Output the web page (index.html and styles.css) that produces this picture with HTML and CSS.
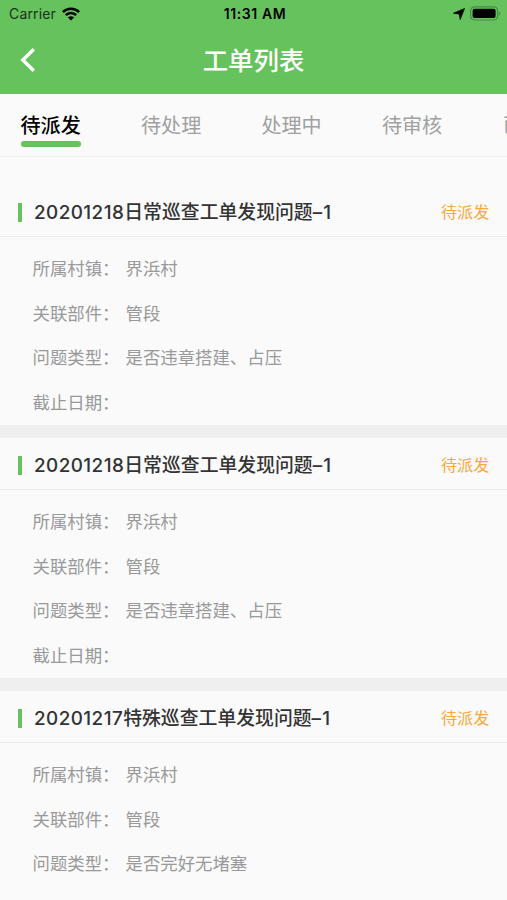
FILE: index.html
```
<!DOCTYPE html>
<html lang="zh-CN">
<head>
  <meta charset="UTF-8">
  <title>工单列表</title>
  <meta name="viewport" content="width=device-width, initial-scale=1.0">
  <link rel="stylesheet" href="styles.css">
</head>
<body>
  <header>
    <div class="status-bar">
      <div class="carrier">
        <span>Carrier</span>
        <svg class="wifi" viewBox="0 0 18 14" width="18" height="14">
          <g fill="none" stroke="#000" stroke-width="2.5">
            <path d="M0.9 5.1a11.5 11.5 0 0 1 16.2 0"/>
            <path d="M3.8 8.2a7.3 7.3 0 0 1 10.4 0"/>
          </g>
          <path d="M9 13.6l-3.1-3.1a4.4 4.4 0 0 1 6.2 0z"/>
        </svg>
      </div>
      <div class="time">11:31 AM</div>
      <div class="battery-box">
        <svg viewBox="0 0 12 12" width="12" height="12">
          <path d="M11.6 0.4L7.2 11.6L6.2 6L0.4 5.2z" stroke="#000" stroke-width="0.7" stroke-linejoin="round"/>
        </svg>
        <svg viewBox="0 0 31 15" width="31" height="15">
          <rect x="0.6" y="0.8" width="27" height="13.2" rx="4" fill="none" stroke="#439042" stroke-width="1.2"/>
          <rect x="2.6" y="2.8" width="23" height="9.2" rx="2"/>
          <path d="M28.8 5.2q3 2.2 0 4.4z" fill="#439042"/>
        </svg>
      </div>
    </div>
    <div class="nav">
      <a class="back" href="#">
        <svg viewBox="0 0 16 26" width="16" height="26">
          <path d="M13.8 2.2L2.8 13l11 10.8" fill="none" stroke="#fff" stroke-width="3.4"/>
        </svg>
      </a>
      <h1>工单列表</h1>
    </div>
  </header>

  <nav class="tabs">
    <a class="tab active">待派发</a>
    <a class="tab">待处理</a>
    <a class="tab">处理中</a>
    <a class="tab">待审核</a>
    <a class="tab">已完成</a>
  </nav>

  <main class="list">
    <section class="card">
      <div class="card-head">
        <h2><span class="num">20201218</span>日常巡查工单发现问题<span class="num">–1</span></h2>
        <span class="state">待派发</span>
      </div>
      <ul class="info">
        <li><span class="label">所属村镇：</span>界浜村</li>
        <li><span class="label">关联部件：</span>管段</li>
        <li><span class="label">问题类型：</span>是否违章搭建、占压</li>
        <li><span class="label">截止日期：</span></li>
      </ul>
    </section>

    <section class="card">
      <div class="card-head">
        <h2><span class="num">20201218</span>日常巡查工单发现问题<span class="num">–1</span></h2>
        <span class="state">待派发</span>
      </div>
      <ul class="info">
        <li><span class="label">所属村镇：</span>界浜村</li>
        <li><span class="label">关联部件：</span>管段</li>
        <li><span class="label">问题类型：</span>是否违章搭建、占压</li>
        <li><span class="label">截止日期：</span></li>
      </ul>
    </section>

    <section class="card">
      <div class="card-head">
        <h2><span class="num">20201217</span>特殊巡查工单发现问题<span class="num">–1</span></h2>
        <span class="state">待派发</span>
      </div>
      <ul class="info">
        <li><span class="label">所属村镇：</span>界浜村</li>
        <li><span class="label">关联部件：</span>管段</li>
        <li><span class="label">问题类型：</span>是否完好无堵塞</li>
      </ul>
    </section>
  </main>
</body>
</html>
```
FILE: styles.css
```
* {
  box-sizing:border-box;
}
html, body {
  margin:0;
  padding:0;
  height:900px;
  overflow:hidden;
  background:#fafafa;
  font-family:Inter, "Noto Sans CJK SC", sans-serif;
}
header {
  height:94px;
  background:#66c25c;
}
.status-bar {
  display:grid;
  grid-template-columns:1fr auto 1fr;
  align-items:center;
  height:27px;
  padding:0 6px 0 9px;
  font-size:14px;
  color:#000;
}
.carrier {
  display:flex;
  align-items:center;
  gap:6px;
  color:#17321a;
  letter-spacing:0.15px;
}
.time {
  font-weight:600;
  letter-spacing:0.6px;
}
.battery-box {
  display:flex;
  justify-content:flex-end;
  align-items:center;
  gap:5px;
}
.nav {
  display:grid;
  grid-template-columns:60px 1fr 60px;
  align-items:center;
  height:66px;
}
.back {
  display:flex;
  padding-left:20px;
}
h1 {
  margin:0;
  padding-top:2px;
  font-size:25.4px;
  line-height:36px;
  font-weight:500;
  color:#fff;
  text-align:center;
}
.tabs {
  display:flex;
  gap:60.2px;
  height:63px;
  padding:17px 0 0 20.5px;
  border-bottom:1px solid #f0f0f0;
  overflow:hidden;
}
.tab {
  flex:none;
  font-size:20.1px;
  line-height:30px;
  color:#a0a0a0;
}
.tab.active {
  font-weight:500;
  color:#000;
}
.tab.active::after {
  content:"";
  display:block;
  height:6px;
  border-radius:3px;
  background:#66c25c;
}
.list {
  padding-top:28px;
}
.card {
  height:253px;
  border-bottom:13px solid #efefef;
}
.card-head {
  display:flex;
  align-items:center;
  height:52px;
  padding:3px 17.5px 0 18px;
  border-bottom:1px solid #ededed;
}
.card-head::before {
  content:"";
  width:4px;
  height:19px;
  margin-right:12px;
  background:#66c25c;
}
h2 {
  flex:1;
  margin:0;
  padding-top:2px;
  font-size:18.85px;
  line-height:28px;
  font-weight:500;
  color:#333;
  white-space:nowrap;
}
.num {
  letter-spacing:0.45px;
}
.num:last-child {
  letter-spacing:1.2px;
}
.state {
  font-size:16.2px;
  line-height:24px;
  color:#f9a83c;
}
.info {
  margin:0;
  padding:10px 0 0 32.5px;
  list-style:none;
}
.info li {
  display:flex;
  height:44.7px;
  line-height:44.7px;
  font-size:17.4px;
  color:#999;
}
.label {
  width:93px;
}
```
